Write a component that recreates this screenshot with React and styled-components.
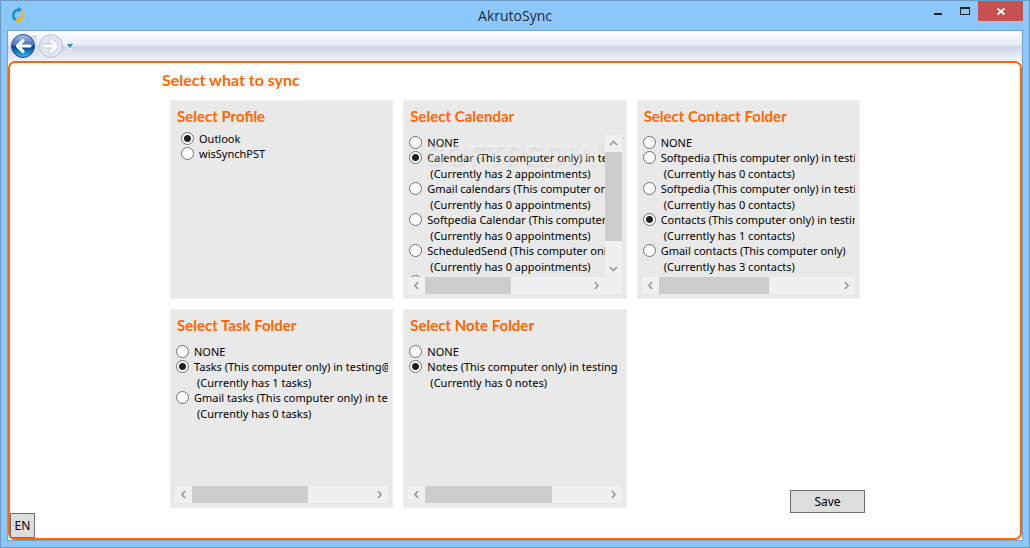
import React from "react";
import styled, { createGlobalStyle } from "styled-components";

const GlobalStyle = createGlobalStyle`
  * { box-sizing: border-box; }
  body {
    margin: 0;
    font: 11px/16px "Segoe UI", "Noto Sans", "Open Sans", sans-serif;
    color: #000;
  }
  button, input { font: inherit; color: inherit; margin: 0; padding: 0; }
`;

const Window = styled.div`
  min-height: 100vh;
  display: flex;
  flex-direction: column;
  padding: 0 6px 6px;
  background: #8cc7fa;
  border: 1px solid #6c9ac4;
`;

const TitleBar = styled.header`
  display: grid;
  grid-template-columns: 1fr auto 1fr;
  height: 29px;
`;

const AppIcon = styled.svg`
  margin: 6px 0 0 3px;
`;

const WindowTitle = styled.div`
  font-family: "Segoe UI", "Open Sans", sans-serif;
  font-size: 14px;
  line-height: 29px;
  color: #1c2a38;
`;

const Controls = styled.div`
  display: flex;
  justify-content: flex-end;
`;

const ControlButton = styled.button`
  display: block;
  width: ${(p) => (p.$close ? 45 : 27)}px;
  height: 20px;
  border: 0;
  background: ${(p) => (p.$close ? "#c75050" : "transparent")};
  svg { display: block; margin: 0 auto; }
`;

const Client = styled.div`
  flex: 1;
  display: flex;
  flex-direction: column;
  background: #fff;
  border: 1px solid #6fa5d6;
`;

const ToolBar = styled.nav`
  display: flex;
  align-items: center;
  height: 30px;
  padding-left: 2px;
  background: linear-gradient(#fff 0, #e4e8f3 15px, #ced5e9 15px, #f1f1fb 30px);
`;

const NavButton = styled.button`
  display: block;
  border: 0;
  background: none;
  svg { display: block; }
`;

const Frame = styled.main`
  flex: 1;
  display: grid;
  grid-template-columns: minmax(25px, 1fr) minmax(0, 706px) minmax(25px, 1fr);
  background: #fff;
  border: 2px solid #ff6600;
  border-radius: 7px;
`;

const LanguageButton = styled.button`
  align-self: end;
  justify-self: start;
  width: 25px;
  height: 25px;
  font-size: 12px;
  background: #ddd;
  border: 1px solid #707070;
`;

const Content = styled.div`
  padding: 7px 0 30px;
`;

const heading = `
  margin: 0;
  font-family: "Trebuchet MS", Lato, sans-serif;
  font-size: 15px;
  line-height: 20px;
  font-weight: 700;
  color: #ff6600;
`;

const PageHeading = styled.h1`
  ${heading}
  font-size: 16px;
`;

const Panels = styled.div`
  display: grid;
  grid-template-columns: repeat(3, minmax(0, 1fr));
  grid-auto-rows: 199px;
  gap: 10px;
  padding: 10px 8px 0;
`;

const PanelBox = styled.section`
  position: relative;
  display: flex;
  flex-direction: column;
  min-width: 0;
  padding: 5px 4px 4px;
  background: #e9e9e9;
  border: 1px solid #eeeeee;
`;

const PanelHeading = styled.h2`
  ${heading}
  padding-left: 2px;
`;

const ScrollArea = styled.div`
  flex: 1;
  min-height: 0;
  display: flex;
  margin-top: ${(p) => (p.$plain ? 5 : 9)}px;
  padding-left: ${(p) => (p.$plain ? 5 : 0)}px;
`;

const Options = styled.div`
  flex: 1;
  min-width: 0;
  overflow: hidden;
  white-space: nowrap;
`;

const OptionLabel = styled.label`
  display: grid;
  grid-template-columns: 13px auto;
  grid-template-rows: 15px;
  grid-auto-rows: 16px;
  column-gap: 5px;
  padding-left: 1px;
  justify-content: start;
  line-height: 15px;
`;

const Radio = styled.input`
  appearance: none;
  align-self: center;
  width: 13px;
  height: 13px;
  border: 1px solid #707070;
  border-radius: 50%;
  background: #fff;
  &:checked {
    background: radial-gradient(circle, #212121 3px, #fff 4px);
  }
`;

const Note = styled.small`
  grid-column: 2;
  padding-left: 3px;
  font-size: inherit;
  line-height: 18px;
`;

const Bar = styled.div`
  display: flex;
  flex-direction: ${(p) => (p.$vertical ? "column" : "row")};
  flex: 0 0 17px;
  padding-right: ${(p) => (p.$corner ? 17 : 0)}px;
  background: #f0f0f0;
`;

const BarButton = styled.button`
  flex: 0 0 17px;
  width: 17px;
  height: 17px;
  border: 0;
  background: none;
  svg { display: block; }
`;

const Track = styled.div`
  flex: 1;
  display: flex;
  flex-direction: ${(p) => (p.$vertical ? "column" : "row")};
`;

const Thumb = styled.div`
  flex: 0 0 ${(p) => p.$size}px;
  background: #cdcdcd;
`;

const SaveCell = styled.div`
  display: flex;
  align-items: flex-end;
  justify-content: flex-end;
  margin: 0 -5px -5px 0;
`;

const SaveButton = styled.button`
  width: 75px;
  height: 23px;
  font-size: 12px;
  background: #ddd;
  border: 1px solid #707070;
`;

const Watermark = styled.div`
  position: absolute;
  top: 36px;
  left: 20px;
  display: flex;
  font: 700 30px/36px "Liberation Sans", Arial, sans-serif;
  color: rgba(255, 255, 255, 0.3);
  text-shadow: 1px 2px 2px rgba(0, 0, 0, 0.05);
  pointer-events: none;
  sup { font-size: 10px; line-height: 20px; }
`;

const arrows = {
  left: "M10 5 L7 8.500 L10 12",
  right: "M7 5 L10 8.500 L7 12",
  up: "M5 10 L8.500 6.500 L12 10",
  down: "M5 7 L8.500 10.500 L12 7",
};

function Arrow({ to }) {
  return (
    <BarButton aria-label={`Scroll ${to}`}>
      <svg width="17" height="17" fill="none" stroke="#9a9a9a" strokeWidth="1.700">
        <path d={arrows[to]} />
      </svg>
    </BarButton>
  );
}

function ScrollBar({ vertical, size, corner }) {
  return (
    <Bar $vertical={vertical} $corner={corner}>
      <Arrow to={vertical ? "up" : "left"} />
      <Track $vertical={vertical}>
        <Thumb $size={size} />
      </Track>
      <Arrow to={vertical ? "down" : "right"} />
    </Bar>
  );
}

function Panel({ title, name, options, selected, plain, hSize, vSize, children }) {
  return (
    <PanelBox>
      <PanelHeading id={`${name}-title`}>{title}</PanelHeading>
      <ScrollArea $plain={plain}>
        <Options role="radiogroup" aria-labelledby={`${name}-title`}>
          {options.map(([label, note], i) => (
            <OptionLabel key={i}>
              <Radio type="radio" name={name} defaultChecked={i === selected} />
              <span>{label}</span>
              {note && <Note>({note})</Note>}
            </OptionLabel>
          ))}
        </Options>
        {vSize && <ScrollBar vertical size={vSize} />}
      </ScrollArea>
      {hSize && <ScrollBar size={hSize} corner={Boolean(vSize)} />}
      {children}
    </PanelBox>
  );
}

const calendars = [
  ["NONE"],
  ["Calendar (This computer only) in testing", "Currently has 2 appointments"],
  ["Gmail calendars (This computer only)", "Currently has 0 appointments"],
  ["Softpedia Calendar (This computer only)", "Currently has 0 appointments"],
  ["ScheduledSend (This computer only)", "Currently has 0 appointments"],
  [""],
];

const contacts = [
  ["NONE"],
  ["Softpedia (This computer only) in testing", "Currently has 0 contacts"],
  ["Softpedia (This computer only) in testing", "Currently has 0 contacts"],
  ["Contacts (This computer only) in testing", "Currently has 1 contacts"],
  ["Gmail contacts (This computer only)", "Currently has 3 contacts"],
];

const tasks = [
  ["NONE"],
  ["Tasks (This computer only) in testing@", "Currently has 1 tasks"],
  ["Gmail tasks (This computer only) in testing", "Currently has 0 tasks"],
];

const notes = [
  ["NONE"],
  ["Notes (This computer only) in testing", "Currently has 0 notes"],
];

export default function App() {
  return (
    <Window>
      <GlobalStyle />
      <TitleBar>
        <AppIcon width="16" height="16" viewBox="0 0 16 16" fill="none" strokeWidth="2.600">
          <path d="M6 13 A5.500 5.500 0 0 1 8 2.800" stroke="#1593cf" />
          <path d="M11 3.500 A5.500 5.500 0 0 1 8 13.200" stroke="#f9b41c" />
          <path d="M8 0 L12 2.500 L8 5.500 Z" fill="#1593cf" />
          <path d="M9 10.500 L5 13.500 L9 16 Z" fill="#f9b41c" />
        </AppIcon>
        <WindowTitle>AkrutoSync</WindowTitle>
        <Controls>
          <ControlButton aria-label="Minimize">
            <svg width="27" height="20"><path d="M10 12h8v2h-8z" fill="#222" /></svg>
          </ControlButton>
          <ControlButton aria-label="Maximize">
            <svg width="27" height="20"><path fillRule="evenodd" d="M9 6h10v8H9z M10 8v5h8V8z" fill="#222" /></svg>
          </ControlButton>
          <ControlButton $close aria-label="Close">
            <svg width="45" height="20"><path d="M19.500 7.500 L26.500 13.500 M26.500 7.500 L19.500 13.500" stroke="#fff" strokeWidth="1.800" /></svg>
          </ControlButton>
        </Controls>
      </TitleBar>
      <Client>
        <ToolBar>
          <NavButton aria-label="Back">
            <svg width="27" height="28" viewBox="0 0 27 28">
              <defs>
                <linearGradient id="back" x1="0" y1="0" x2="0" y2="1">
                  <stop offset="0" stopColor="#a9c1e6" />
                  <stop offset=".48" stopColor="#3f6fba" />
                  <stop offset=".52" stopColor="#0c3a8c" />
                  <stop offset="1" stopColor="#27c3f5" />
                </linearGradient>
              </defs>
              <path d="M14 3 Q21 5 27 4 V24 Q21 22 14 25z" fill="#dde2f0" />
              <path d="M14 3 Q21 5 27 4" fill="none" stroke="#c3cbe0" />
              <circle cx="13" cy="14" r="11.500" fill="url(#back)" stroke="#24498e" />
              <path d="M20 14 H8 M13 8.500 L7.500 14 L13 19.500" fill="none" stroke="#fff" strokeWidth="3.200" strokeLinecap="round" strokeLinejoin="round" />
            </svg>
          </NavButton>
          <NavButton aria-label="Forward">
            <svg width="28" height="28" viewBox="0 0 28 28">
              <circle cx="14" cy="14" r="11.500" fill="#e2e5f0" stroke="#bcc3d8" />
              <path d="M7 14 H19 M14 8.500 L19.500 14 L14 19.500" fill="none" stroke="#c2c8db" strokeWidth="4.800" strokeLinecap="round" strokeLinejoin="round" />
              <path d="M7 14 H19 M14 8.500 L19.500 14 L14 19.500" fill="none" stroke="#fafbff" strokeWidth="3.200" strokeLinecap="round" strokeLinejoin="round" />
            </svg>
          </NavButton>
          <NavButton aria-label="History">
            <svg width="10" height="28"><path d="M0 11 H10 L5 18 Z" fill="#fff" /><path d="M2 12 H8 L5 16 Z" fill="#2c8fc0" stroke="#2c8fc0" strokeWidth=".5" /></svg>
          </NavButton>
        </ToolBar>
        <Frame>
          <LanguageButton>EN</LanguageButton>
          <Content>
            <PageHeading>Select what to sync</PageHeading>
            <Panels>
              <Panel title="Select Profile" name="profile" plain options={[["Outlook"], ["wisSynchPST"]]} selected={0} />
              <Panel title="Select Calendar" name="calendar" options={calendars} selected={1} hSize={86} vSize={89}>
                <Watermark aria-hidden="true">SOFTPEDIA<sup>®</sup></Watermark>
              </Panel>
              <Panel title="Select Contact Folder" name="contact" options={contacts} selected={3} hSize={110} />
              <Panel title="Select Task Folder" name="task" options={tasks} selected={1} hSize={116} />
              <Panel title="Select Note Folder" name="note" options={notes} selected={1} hSize={127} />
              <SaveCell>
                <SaveButton>Save</SaveButton>
              </SaveCell>
            </Panels>
          </Content>
        </Frame>
      </Client>
    </Window>
  );
}
